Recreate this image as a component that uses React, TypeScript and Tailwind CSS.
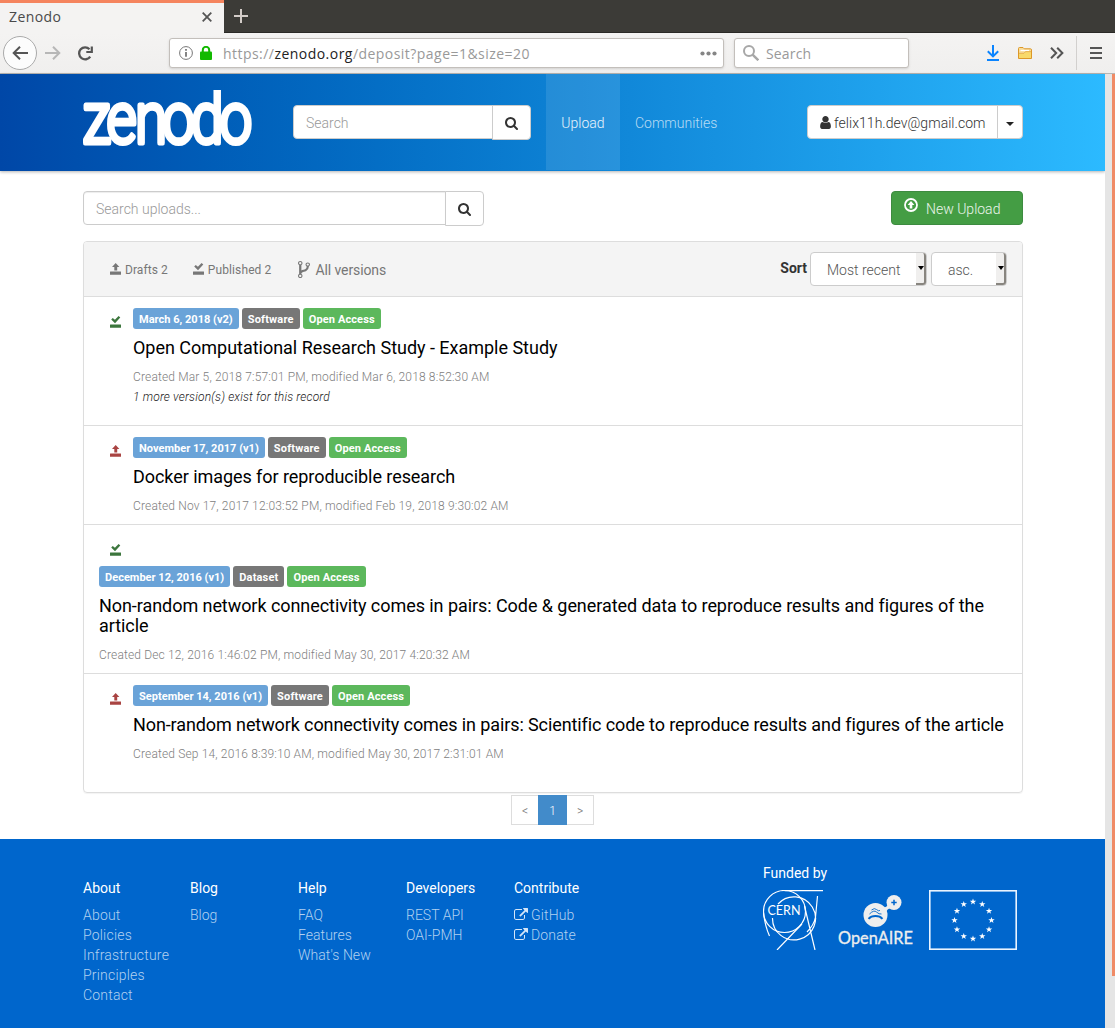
import React from "react";

const SEARCH =
  "M1152 832q0-185-131.5-316.5t-316.5-131.5-316.5 131.5-131.5 316.5 131.5 316.5 316.5 131.5 316.5-131.5 131.5-316.5zm512 832q0 52-38 90t-90 38q-54 0-90-38l-343-342q-179 124-399 124-143 0-273.5-55.5t-225-150-150-225-55.5-273.5 55.5-273.5 150-225 225-150 273.5-55.5 273.5 55.5 225 150 150 225 55.5 273.5q0 220-124 399l343 343q37 37 37 90z";
const USER =
  "M1536 1399q0 109-62.5 187t-150.5 78h-854q-88 0-150.5-78t-62.5-187q0-85 8.5-160.5t31.5-152 58.5-131 94-89 134.5-34.5q131 128 313 128t313-128q76 0 134.5 34.5t94 89 58.5 131 31.5 152 8.5 160.5zm-256-887q0 159-112.5 271.5t-271.5 112.5-271.5-112.5-112.5-271.5 112.5-271.5 271.5-112.5 271.5 112.5 112.5 271.5z";
const FORK =
  "M672 1472q0-40-28-68t-68-28-68 28-28 68 28 68 68 28 68-28 28-68zm0-1152q0-40-28-68t-68-28-68 28-28 68 28 68 68 28 68-28 28-68zm640 128q0-40-28-68t-68-28-68 28-28 68 28 68 68 28 68-28 28-68zm96 0q0 52-26 96.5t-70 69.5q-2 287-226 414-67 38-203 81-128 40-169.5 71t-41.5 100v26q44 25 70 69.5t26 96.5q0 80-56 136t-136 56-136-56-56-136q0-52 26-96.5t70-69.5v-820q-44-25-70-69.5t-26-96.5q0-80 56-136t136-56 136 56 56 136q0 52-26 96.5t-70 69.5v497q54-26 154-57 55-17 87.5-29.5t70.5-31 59-39.5 40.5-51 28-69.5 8.5-91.5q-44-25-70-69.5t-26-96.5q0-80 56-136t136-56 136 56 56 136z";
const EXTERNAL =
  "M1408 928v320q0 119-84.5 203.5t-203.5 84.5h-832q-119 0-203.5-84.5t-84.5-203.5v-832q0-119 84.5-203.5t203.5-84.5h704q14 0 23 9t9 23v64q0 14-9 23t-23 9h-704q-66 0-113 47t-47 113v832q0 66 47 113t113 47h832q66 0 113-47t47-113v-320q0-14 9-23t23-9h64q14 0 23 9t9 23zm384-864v512q0 26-19 45t-45 19-45-19l-176-176-652 652q-10 10-23 10t-23-10l-114-114q-10-10-10-23t10-23l652-652-176-176q-19-19-19-45t19-45 45-19h512q26 0 45 19t19 45z";

function Glyph({ d, className }: { d: string; className: string }) {
  return (
    <svg viewBox="0 0 1792 1792" fill="currentColor" className={className}>
      <path d={d} />
    </svg>
  );
}

function StatusIcon({ kind, className }: { kind: "open" | "saved"; className: string }) {
  return (
    <svg viewBox="0 0 12 12" fill="currentColor" className={className}>
      {kind === "open" ? (
        <path d="M5.7 0L9.4 4.1H7.2V7.6H4.3V4.1H2z" />
      ) : (
        <path d="M1.2 3.4L2.8 1.9L4.9 3.8L8.6 0L10.3 1.4L5 7.2z" />
      )}
      <path d="M.4 8.5H10.7Q11 8.5 11 8.8V11.7H0V8.8Q0 8.5.4 8.5z" />
    </svg>
  );
}

function BrowserChrome() {
  return (
    <div className="font-['Open_Sans','Noto_Sans',sans-serif] text-[14px]">
      <div className="flex h-[33px] border-b border-[#2a2926] bg-[#3c3b37]">
        <div className="flex h-[33px] w-[224px] shrink-0 items-center justify-between border-t-[3px] border-[#f5845e] bg-[#f4f3f2] pr-3 pb-[3px] pl-[9px] text-[#4a4a4a]">
          <span className="leading-[20px] tracking-[.4px]">Zenodo</span>
          <svg viewBox="0 0 10 10" className="h-[10px] w-[10px]" stroke="#555" strokeWidth="1.8">
            <path d="M.7.7l8.6 8.6M9.3.7L.7 9.3" />
          </svg>
        </div>
        <svg viewBox="0 0 14 14" className="mt-[9px] ml-[10px] h-[14px] w-[14px]" stroke="#d3ccc8" strokeWidth="2">
          <path d="M7 0v14M0 7h14" />
        </svg>
      </div>
      <div className="flex h-[41px] items-start border-b border-[#b9b7b4] bg-gradient-to-b from-[#f4f3f2] to-[#f0efee] pt-[3px]">
        <div className="ml-[3px] flex h-[34px] w-[34px] items-center justify-center rounded-full border border-[#aaa] bg-[#fcfcfc]">
          <svg viewBox="0 0 16 14" className="h-[14px] w-4" fill="none" stroke="#555" strokeWidth="2">
            <path d="M8 .8L1.7 7L8 13.2M1.5 7H16" />
          </svg>
        </div>
        <svg viewBox="0 0 16 14" className="mt-[10px] ml-[8px] h-[14px] w-4" fill="none" stroke="#b7b7b7" strokeWidth="2">
          <path d="M8 .8L14.3 7L8 13.2M14.5 7H0" />
        </svg>
        <svg viewBox="0 0 16 15" className="mt-[10px] ml-[17px] h-[15px] w-4" fill="none" stroke="#555" strokeWidth="2.3">
          <path d="M12.2 10.6A6 6 0 1 1 11.5 3.2" />
          <path d="M13.8.5V6H8.3" strokeWidth="2.2" />
        </svg>
        <div className="mt-[2px] ml-[75px] flex h-[30px] w-[555px] items-center rounded-[3px] border border-[#c3bfbb] bg-white shadow-sm">
          <svg viewBox="0 0 14 14" className="ml-[9px] h-[14px] w-[14px]" fill="none" stroke="#777">
            <circle cx="7" cy="7" r="6.4" />
            <path d="M7 6v4.8M7 3v1.8" strokeWidth="1.8" />
          </svg>
          <svg viewBox="0 0 12 14" className="ml-[7px] h-[14px] w-[12px]">
            <path d="M2.8 6V4a3.2 3.2 0 0 1 6.4 0v2" fill="none" stroke="#12b900" strokeWidth="2" />
            <rect y="5.5" width="12" height="8.5" rx="1" fill="#12b900" />
          </svg>
          <span className="ml-[11px] tracking-[.46px] text-[#999]">
            https://<span className="text-[#222]">zenodo.org</span>/deposit?page=1&amp;size=20
          </span>
          <svg viewBox="0 0 17 5" className="mr-[6px] ml-auto h-[5px] w-[17px]" fill="#858585">
            <circle cx="2.5" cy="2.5" r="2.1" />
            <circle cx="8.5" cy="2.5" r="2.1" />
            <circle cx="14.5" cy="2.5" r="2.1" />
          </svg>
        </div>
        <div className="mt-[2px] ml-[10px] flex h-[30px] w-[175px] items-center rounded-[3px] border border-[#c3bfbb] bg-white shadow-sm">
          <svg viewBox="0 0 16 16" className="ml-[8px] h-4 w-4" fill="none" stroke="#a7a7a7" strokeWidth="2">
            <circle cx="6" cy="6" r="5" />
            <path d="M9.6 9.6L15.3 15.3" strokeWidth="2.4" />
          </svg>
          <span className="ml-[7px] tracking-[.15px] text-[#999]">Search</span>
        </div>
        <svg viewBox="0 0 12 16" className="mt-[9px] ml-[78px] h-4 w-3" fill="none" stroke="#0a84ff" strokeWidth="2">
          <path d="M6 0V11M.8 6.3L6 11.4L11.2 6.3M0 15H12" />
        </svg>
        <svg viewBox="0 0 14 12" className="mt-[11px] ml-[19px] h-3 w-[14px]">
          <path d="M.5 1.5Q.5.5 1.5.5H5L6.3 1.8H12.5Q13.5 1.8 13.5 3V11.5H.5z" fill="#f9dc9a" stroke="#dc9829" />
          <path d="M2.5 3.5H11" stroke="#fff" strokeWidth="1.2" />
          <path d="M1 6.8H6L7.5 5H13V11H1z" fill="#f8d96a" />
          <path d="M1 6.3H6L7.5 4.6H13" fill="none" stroke="#e2a63c" strokeWidth=".8" />
        </svg>
        <svg viewBox="0 0 14 12" className="mt-[11px] ml-[18px] h-3 w-[14px]" fill="none" stroke="#555" strokeWidth="2">
          <path d="M1 .7L6.2 6L1 11.3M7.2.7L12.4 6L7.2 11.3" />
        </svg>
        <div className="ml-[12px] h-[34px] w-px bg-[#d2d0ce]" />
        <svg viewBox="0 0 12 12" className="mt-[11px] ml-[13px] h-3 w-3" stroke="#555" strokeWidth="2">
          <path d="M0 1H12M0 6H12M0 11H12" />
        </svg>
      </div>
    </div>
  );
}

function SearchButton() {
  return (
    <button className="-ml-px flex h-[35px] w-[39px] items-center justify-center rounded-r-[4px] border border-[#ccc] bg-white text-[#333]">
      <Glyph d={SEARCH} className="h-[14px] w-[14px]" />
    </button>
  );
}

function Header() {
  return (
    <header className="flex h-[97px] items-start bg-gradient-to-r from-[#0047a7] to-[#2cbaff] pl-[78px] shadow-[0_1px_3px_rgba(0,0,0,.3)]">
      <svg viewBox="-5 -16 190 96" className="h-[96px] w-[190px] shrink-0">
        <clipPath id="logo-bounds">
          <rect x="-5" y="0" width="190" height="70" />
        </clipPath>
        <g clipPath="url(#logo-bounds)">
          <text
            transform="scale(.8 1)"
            x="-.5 29.5 65 99 135 170.5"
            y="53"
            fill="#fff"
            stroke="#fff"
            strokeWidth="5"
            strokeLinejoin="round"
            className="font-['Roboto',sans-serif] text-[73px] font-light"
          >
            zenodo
          </text>
        </g>
      </svg>
      <div className="mt-[31px] ml-[25px] flex">
        <div className="flex h-[34px] w-[200px] items-center rounded-l-[4px] border border-[#ccc] bg-white pt-[2px] pl-3 text-[#999]">Search</div>
        <SearchButton />
      </div>
      <nav className="ml-[15px] flex h-24">
        <a className="flex w-[74px] items-center justify-center bg-white/10 pt-[2px] text-white/90">Upload</a>
        <a className="ml-[15px] flex items-center pt-[2px] text-white/70">Communities</a>
      </nav>
      <div className="mt-[31px] mr-[82px] ml-auto flex h-[34px] w-[216px] items-center rounded-[4px] border border-[#ccc] bg-white text-[#333]">
        <Glyph d={USER} className="ml-[10px] h-[15px] w-[15px]" />
        <span className="ml-px pt-[2px] tracking-[.04px] whitespace-nowrap">felix11h.dev@gmail.com</span>
        <div className="ml-auto flex h-full w-[25px] items-center justify-center border-l border-[#ccc]">
          <div className="mt-1 h-0 w-0 border-x-4 border-t-4 border-x-transparent border-t-[#222]" />
        </div>
      </div>
    </header>
  );
}

type Upload = {
  date: string;
  type: string;
  title: string;
  meta: string;
  note?: string;
  kind: "open" | "saved";
  stacked?: boolean;
  height: string;
  tracking: string;
};

const UPLOADS: Upload[] = [
  {
    date: "March 6, 2018 (v2)",
    type: "Software",
    title: "Open Computational Research Study - Example Study",
    meta: "Created Mar 5, 2018 7:57:01 PM, modified Mar 6, 2018 8:52:30 AM",
    note: "1 more version(s) exist for this record",
    kind: "saved",
    height: "h-[129px]",
    tracking: "tracking-[-.02px]",
  },
  {
    date: "November 17, 2017 (v1)",
    type: "Software",
    title: "Docker images for reproducible research",
    meta: "Created Nov 17, 2017 12:03:52 PM, modified Feb 19, 2018 9:30:02 AM",
    kind: "open",
    height: "h-[99px]",
    tracking: "tracking-[-.06px]",
  },
  {
    date: "December 12, 2016 (v1)",
    type: "Dataset",
    title:
      "Non-random network connectivity comes in pairs: Code & generated data to reproduce results and figures of the article",
    meta: "Created Dec 12, 2016 1:46:02 PM, modified May 30, 2017 4:20:32 AM",
    kind: "saved",
    stacked: true,
    height: "h-[149px]",
    tracking: "tracking-[-.06px]",
  },
  {
    date: "September 14, 2016 (v1)",
    type: "Software",
    title: "Non-random network connectivity comes in pairs: Scientific code to reproduce results and figures of the article",
    meta: "Created Sep 14, 2016 8:39:10 AM, modified May 30, 2017 2:31:01 AM",
    kind: "open",
    height: "h-[118px]",
    tracking: "tracking-[-.1px]",
  },
];

function Badge({ color, children }: { color: string; children: React.ReactNode }) {
  return <span className={`flex h-[21px] items-center rounded-[3px] px-[6px] pt-[2px] text-[11px] font-bold text-white ${color}`}>{children}</span>;
}

function UploadRow({ u }: { u: Upload }) {
  return (
    <article className={`border-b border-[#ddd] pl-[15px] last:border-b-0 ${u.height} ${u.stacked ? "block pt-[19px] pr-[15px]" : "flex pt-[11px] pr-2"}`}>
      <StatusIcon
        kind={u.kind}
        className={`ml-[11px] h-3 w-3 shrink-0 ${u.stacked ? "mb-[10px]" : "mt-[8px] mr-[11px]"} ${u.kind === "open" ? "text-[#a94442]" : "text-[#3c763d]"}`}
      />
      <div>
        <div className="flex gap-[3px]">
          <Badge color="bg-[#6aa3d8] tracking-[.02px]">{u.date}</Badge>
          <Badge color="bg-[#777] tracking-[.18px]">{u.type}</Badge>
          <Badge color="bg-[#5cb85c] tracking-[.12px]">Open Access</Badge>
        </div>
        <h4 className={`mt-[9px] text-[18px] leading-[20px] font-normal text-black ${u.tracking}`}>{u.title}</h4>
        <p className="mt-[9px] text-[12px] leading-[20px] tracking-[.15px] text-[#808080]">{u.meta}</p>
        {u.note && <p className="text-[12px] leading-[20px] tracking-[.17px] text-[#222] italic">{u.note}</p>}
      </div>
    </article>
  );
}

function SortSelect({ label, width }: { label: string; width: string }) {
  return (
    <div className={`flex h-[34px] items-center rounded-[4px] border border-[#ccc] bg-white pl-4 text-[#555] ${width}`}>
      <span className="pt-[2px]">{label}</span>
      <div className="ml-auto flex h-[32px] w-[10px] items-center justify-end rounded-r-[3px] border-r-2 border-b-2 border-[#88857f] bg-[#f0efee]">
        <div className="h-0 w-0 border-x-[3px] border-t-[4px] border-x-transparent border-t-black" />
      </div>
    </div>
  );
}

function Panel() {
  return (
    <section className="mt-[15px] rounded-[4px] border border-[#ddd] shadow-[0_1px_1px_rgba(0,0,0,.05)]">
      <div className="flex h-[55px] items-center rounded-t-[3px] border-b border-[#ddd] bg-[#f4f4f4] font-normal text-[#777]">
        <StatusIcon kind="open" className="ml-[26px] h-3 w-3" />
        <span className="ml-[3px] pt-[2px] text-[12px] tracking-[.06px]">Drafts 2</span>
        <StatusIcon kind="saved" className="ml-[25px] h-3 w-3" />
        <span className="ml-[3px] pt-[2px] text-[12px] tracking-[.12px]">Published 2</span>
        <svg viewBox="384 128 1024 1536" fill="currentColor" className="mt-px ml-[27px] h-[17px] w-[12px]" preserveAspectRatio="none">
          <path d={FORK} />
        </svg>
        <span className="ml-[5px] pt-[2px] tracking-[-.1px]">All versions</span>
        <span className="mr-[3px] ml-auto pb-[2px] font-bold text-[#333]">Sort</span>
        <div className="mr-[15px] flex gap-[4px] font-light">
          <SortSelect label="Most recent" width="w-[117px]" />
          <SortSelect label="asc." width="w-[76px]" />
        </div>
      </div>
      {UPLOADS.map((u) => (
        <UploadRow key={u.date} u={u} />
      ))}
    </section>
  );
}

const FOOTER = [
  { title: "About", width: "w-[107px] tracking-[.2px]", links: ["About", "Policies", "Infrastructure", "Principles", "Contact"] },
  { title: "Blog", width: "w-[108px]", links: ["Blog"] },
  { title: "Help", width: "w-[108px] tracking-[.04px]", links: ["FAQ", "Features", "What's New"] },
  { title: "Developers", width: "w-[108px]", links: ["REST API", "OAI-PMH"] },
  { title: "Contribute", width: "w-[249px] tracking-[.15px]", links: ["GitHub", "Donate"], external: true },
];

function CernLogo() {
  return (
    <svg viewBox="0 0 60 60" className="h-[60px] w-[60px]" fill="none" stroke="#fff" strokeWidth="1.2">
      <circle cx="21.5" cy="21.5" r="21" />
      <path d="M21.5.6H60M15 14A21.5 21.5 0 1 1 9.5 28M.5 23Q2 36 6.5 46M39 34L14 60M41.5 16L52 60M54.5 6L52.5 27Q51 35 44 42" />
      <text
        x="4.5"
        y="25.3"
        textLength="33"
        lengthAdjust="spacingAndGlyphs"
        fill="#fff"
        stroke="none"
        className="font-['Lato',sans-serif] text-[13px] font-normal"
      >
        CERN
      </text>
    </svg>
  );
}

function OpenAireLogo() {
  return (
    <svg viewBox="0 0 84 60" className="h-[60px] w-[84px]" fill="#eee">
      <circle cx="37.5" cy="25" r="12" />
      <circle cx="56" cy="12.5" r="7.5" />
      <path d="M45 17.5Q49 17.5 50 14L53.5 18.5Q49 18 48.5 22z" />
      <path d="M56 9.8v5.4M53.3 12.5h5.4" stroke="#0066cc" strokeWidth="1.5" />
      <path d="M30.5 28.8Q33 26 37.5 26T44.5 28.8" fill="none" stroke="#0066cc" strokeWidth="2" />
      <path d="M31.5 24Q36 19.5 38.5 22T43.5 24M33.5 20Q36.5 17.5 38.5 19.5T42 20.5" fill="none" stroke="#0066cc" strokeWidth=".9" />
      <text
        x="0"
        y="53.5"
        textLength="75"
        lengthAdjust="spacingAndGlyphs"
        stroke="#eee"
        strokeWidth=".3"
        className="font-['Lato',sans-serif] text-[16.5px] font-normal"
      >
        OpenAIRE
      </text>
    </svg>
  );
}

function EuFlag() {
  const star = "M0-3.3L.8-1.05L3.2-1.05L1.3.4L2 2.6L0 1.25L-2 2.6L-1.3.4L-3.2-1.05L-.8-1.05z";
  return (
    <svg viewBox="0 0 88 60" className="h-[60px] w-[88px]">
      <rect x=".8" y=".8" width="86.4" height="58.4" fill="none" stroke="#eaf4ff" strokeWidth="1.6" />
      {Array.from({ length: 12 }, (_, i) => {
        const a = (i * Math.PI) / 6;
        return <path key={i} d={star} fill="#fff" transform={`translate(${44 + 18.5 * Math.sin(a)} ${30.3 - 18.5 * Math.cos(a)})`} />;
      })}
    </svg>
  );
}

function Footer() {
  return (
    <footer className="flex h-[189px] bg-[#0066cc] pl-[83px] leading-[20px] text-white">
      {FOOTER.map((col) => (
        <div key={col.title} className={`pt-[39px] ${col.width}`}>
          <h5 className="mb-[7px] font-normal tracking-normal">{col.title}</h5>
          {col.links.map((l) => (
            <a key={l} className="flex items-center text-[#b2d1f0]">
              {col.external && <Glyph d={EXTERNAL} className="mr-[3px] h-[14px] w-[14px] text-[#d5e6f8]" />}
              {l}
            </a>
          ))}
        </div>
      ))}
      <div className="pt-6">
        <h5 className="font-normal">Funded by</h5>
        <div className="mt-[7px] flex">
          <CernLogo />
          <div className="ml-[15px]">
            <OpenAireLogo />
          </div>
          <div className="ml-[7px]">
            <EuFlag />
          </div>
        </div>
      </div>
    </footer>
  );
}

export default function App() {
  return (
    <div className="h-[1028px] w-[1115px] overflow-hidden bg-white">
      <BrowserChrome />
      <div className="flex h-[954px]">
        <div className="flex w-[1105px] flex-col font-['Roboto',sans-serif] text-[14px] leading-[20px] font-light">
          <Header />
          <main className="mx-[83px] mt-5 h-[648px] w-[940px]">
            <div className="flex justify-between">
              <div className="flex">
                <div className="flex h-[34px] w-[363px] items-center rounded-l-[4px] border border-[#ccc] pt-px pl-3 text-[#999] shadow-[inset_0_1px_1px_rgba(0,0,0,.075)]">
                  Search uploads...
                </div>
                <SearchButton />
              </div>
              <button className="flex h-[34px] w-[132px] items-center rounded-[4px] border border-[#3d8b40] bg-[#449d44] text-white/90">
                <svg viewBox="0 0 14 14" className="mb-[7px] ml-[12px] h-[14px] w-[14px]">
                  <circle cx="7" cy="7" r="6" fill="none" stroke="#fff" strokeWidth="1.8" />
                  <path d="M7 3L10.4 7H8.3V10.4H5.7V7H3.6z" fill="#fff" />
                </svg>
                <span className="ml-2 pt-[2px]">New Upload</span>
              </button>
            </div>
            <Panel />
            <div className="mt-[2px] ml-[428px] flex h-[30px] w-[83px] text-center text-[12px] leading-[32px] text-[#777]">
              <span className="w-[27px] border border-r-0 border-[#ddd] leading-[30px]">&lt;</span>
              <span className="w-[29px] bg-[#428bca] text-white">1</span>
              <span className="w-[27px] border border-l-0 border-[#ddd] leading-[30px]">&gt;</span>
            </div>
          </main>
          <Footer />
        </div>
        <div className="w-[7px] bg-[#e5e5e5]" />
        <div className="w-[3px] bg-[#e5e5e5]">
          <div className="h-[902px] bg-[#f08b66]" />
        </div>
      </div>
    </div>
  );
}
